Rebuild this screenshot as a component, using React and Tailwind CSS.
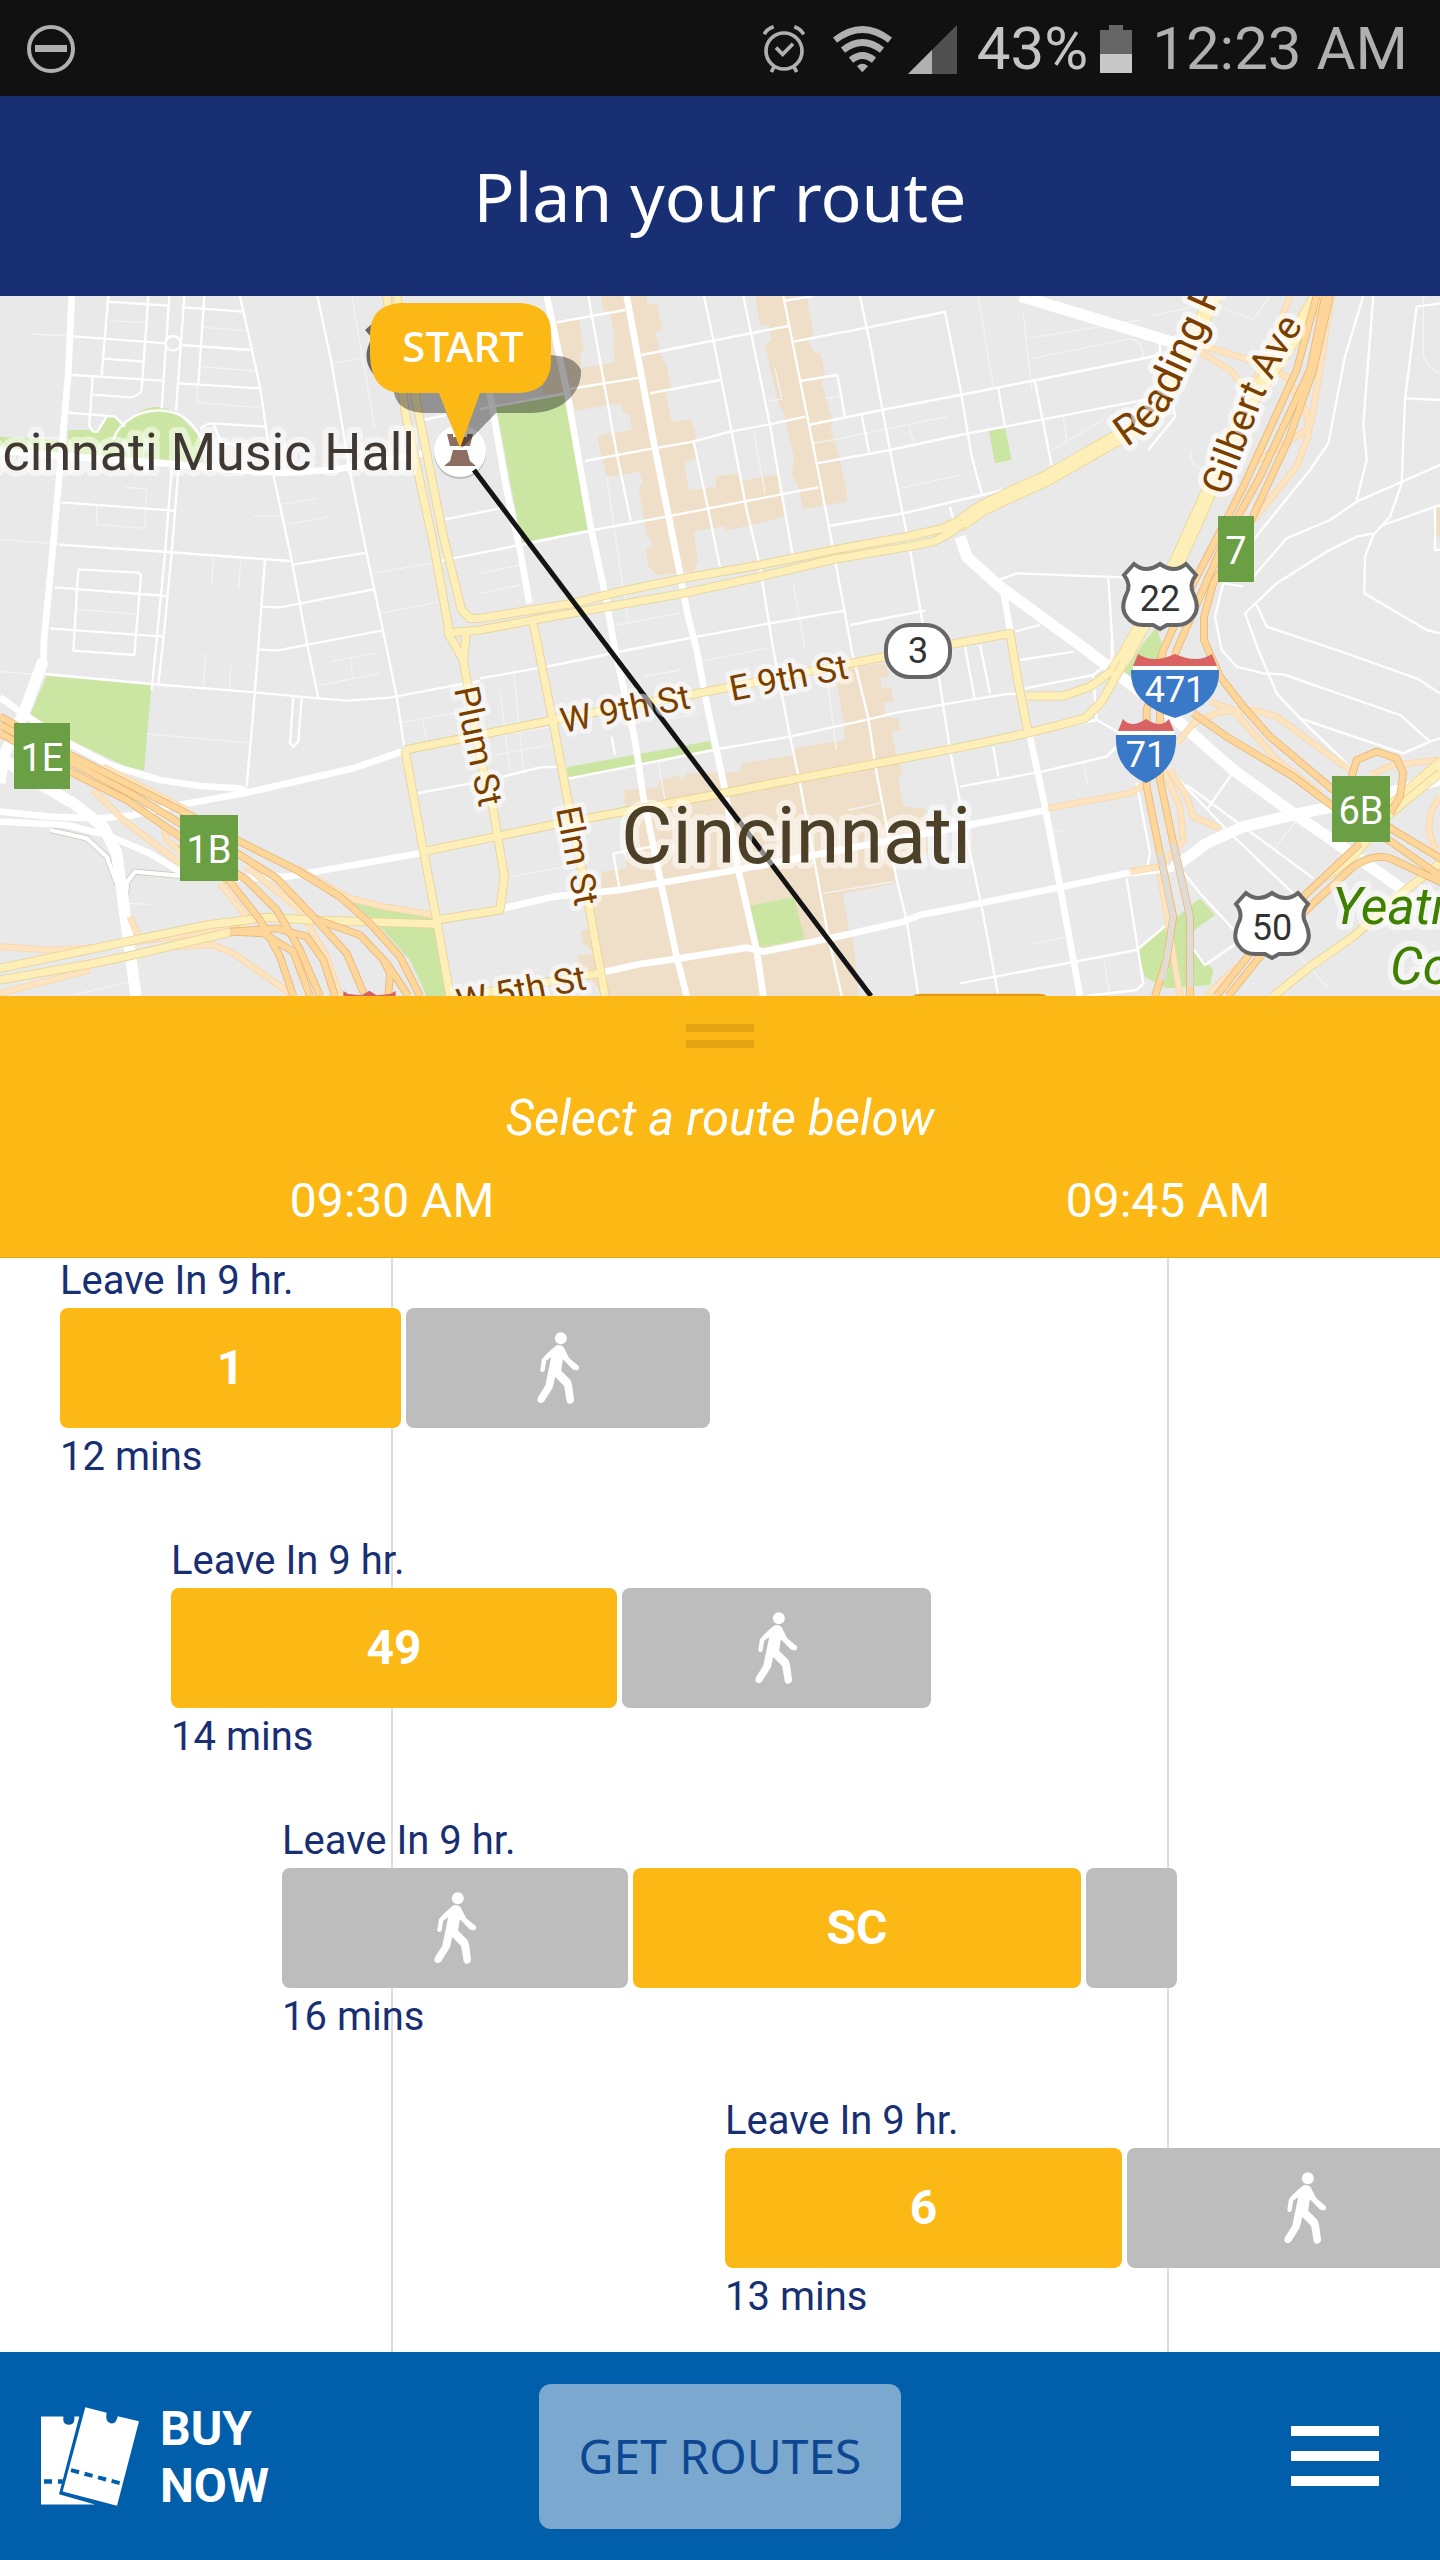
// Horizontal positions on the timeline are in units of a 1440 wide screen
const vw = (x) => `${x / 14.4}vw`

const TICKS = ['09:30 AM', '09:45 AM']
const TICK_WIDTH = 776
const FIRST_TICK = 392

const ROUTES = [
  { id: 'r1', start: 60, leave: 'Leave In 9 hr.', total: '12 mins', legs: [{ bus: '1', width: 341 }, { walk: true, width: 304 }] },
  { id: 'r2', start: 171, leave: 'Leave In 9 hr.', total: '14 mins', legs: [{ bus: '49', width: 446 }, { walk: true, width: 309 }] },
  { id: 'r3', start: 282, leave: 'Leave In 9 hr.', total: '16 mins', legs: [{ walk: true, width: 346 }, { bus: 'SC', width: 448 }, { width: 91 }] },
  { id: 'r4', start: 725, leave: 'Leave In 9 hr.', total: '13 mins', legs: [{ bus: '6', width: 397 }, { walk: true, width: 356 }] },
]

// Map geometry, three units to a pixel
const PARKS = [
  'M0 440L205 450V420H300L320 382H345L370 405Q470 300 560 400L600 440L612 520L0 478Z',
  'M1488 350L1692 315L1770 718L1565 758Z',
  'M2967 422L3015 415L3035 510L2985 520Z',
  'M140 1157L455 1185L432 1442L380 1430L210 1350L90 1275Z',
  'M1055 1835L1130 1855L1300 1875L1350 2118H1280L1230 2010L1130 1900Z',
  'M1700 1432L2130 1353L2137 1380L1706 1462Z',
  'M2250 1847L2382 1822L2415 1947L2275 1973Z',
  'M3430 1060L3470 1010L3485 1060L3470 1110L3400 1160L3370 1150Z',
  'M3600 1825L3645 1875L3570 1930V1970L3640 2040L3630 2085L3500 2095L3435 2060L3410 1980Z',
]

const BLOCKS = [
  'M1650 95L1737 90L1752 185L1740 190L1745 235L1845 215L1838 160L1845 150L1830 70L1810 60L1803 18H1940L1943 45L1970 40L1988 120L1965 130L1988 210L2000 225L2015 295L1998 310L2015 395L2075 388L2090 440L2082 450L2088 505L2052 520L2068 600L2120 595L2148 590L2146 560L2215 548L2227 573L2332 553L2345 610L2360 675L2320 690L2178 722L2175 708L2080 725L2094 810L2080 845L1970 855L1945 830L1937 780L1960 765L1940 735L1915 590L1928 583L1920 545L1820 562L1792 445L1810 432L1895 420L1890 375L1870 370L1860 340L1725 362L1710 305L1625 315Z',
  'M2265 18H2420L2440 130L2425 150L2443 190H2460L2475 250L2465 280L2500 400L2490 415L2515 490L2540 600V635L2410 657L2395 590L2375 555L2382 500L2350 365L2335 340L2295 165L2315 150L2305 105H2280Z',
  'M1873 1500L1975 1490V1470L2040 1455L2045 1475L2060 1450L2220 1445L2225 1420L2380 1395L2385 1375L2535 1350L2530 1290L2510 1180L2515 1135L2655 1120L2670 1160L2640 1165L2645 1195L2675 1192L2682 1235L2650 1240L2660 1280L2695 1285L2702 1320L2675 1325L2685 1380L2710 1450L2695 1460L2710 1550L2775 1555L2785 1690L2690 1705L2685 1780L2528 1812L2548 1920L2560 1950L2575 2118H1815L1730 2020L1735 1995L1780 1990L1745 1955V1920H1775L1765 1820L1805 1805V1745L1880 1735Z',
  'M4305 655H4320V740H4297Z',
]

const LANES = [
  'M90 132L220 138M330 92L440 98M610 112L735 122M605 230L765 243M592 285V337L780 353M0 748L178 762',
  'M375 592L440 597L435 715L290 703V648M845 643L950 625M760 679H845M860 703L990 679M640 800L635 885M722 808L716 895',
  'M1055 18L1125 415M1000 220L1090 203M1120 850L1320 815M1140 970L1320 935M230 958L405 972',
  'M1440 850L1560 825M1440 910L1560 885M1820 560L1885 1000M1850 1005L2040 970M2380 880L2415 1080M2305 332L2345 328L2325 235M2260 420L2295 610M2440 460L2520 445L2840 380M2700 595L2880 555M2475 325L2520 318M2725 400L2742 460',
  'M2935 18L2980 290M3070 70L3095 300M3085 145L3420 90M3095 205L3380 148Q3425 140 3430 200M3155 480L3310 390M3190 380L3200 450M3450 80L3620 40M3650 45L3760 90L3810 18M3575 480Q3560 520 3610 540M4270 18V200Q4290 240 4320 250',
  'M1500 1200L1530 1440M1540 1130L1570 1440M1480 1340L1650 1310M1480 1395L1650 1365M0 1145L130 1155M440 1332L740 1358M610 1190L617 1090M688 1200L692 1125M995 1115L1130 1088M955 1187L1140 1150M1050 1105L1060 1165M1205 1297L1370 1268M1268 1290L1280 1350M220 2115L390 2075M380 1840L450 1843',
  'M1930 1160L2040 1140M1990 1290L2100 1270M1975 1420L2000 1560M2100 1115L2300 1075M2480 1160L2510 1380M2545 1560L2640 1540M1530 1760L1700 1730M2470 1810L2680 1775M3250 1425L3265 1490M3100 1960L3210 1940M3310 2000L3330 2118M3160 1625L3195 1620M3900 2000L3985 2095M3825 1675L3890 1590',
]

const STREETS = [
  'M325 18L305 255M445 18L425 300Q420 315 393 322L280 314M278 260L268 405Q275 430 292 425L320 380M508 18L485 355M553 18L528 362M613 18L595 283',
  'M320 35L505 47M553 52L730 65M220 139L500 160M540 165L752 180M312 206L432 215M218 255L487 272M537 280L778 295M205 368L345 380L375 410',
  'M340 450Q350 410 400 380Q470 345 540 375Q580 395 605 450M720 18L780 290L815 530L875 810L925 1080L955 1225M952 18L995 220L1050 545L1100 790L1155 1050L1190 1220L1213 1370M600 415Q620 400 640 400L795 410M640 400L665 460L780 468',
  'M185 637L522 662M178 764L500 786L870 813M880 824L1100 788M515 540L495 790L470 1050L455 1200M535 540L515 790L490 1050L475 1180M165 892L500 918M150 1015L487 1040M235 838L415 848L423 855L403 1095L220 1082L235 838M795 810L762 1240L740 1490M785 950L840 952L1120 898M775 1078L830 1082L1145 1022',
  'M1335 688L1500 655M1325 812L1560 765M1270 390L1360 370',
  'M1670 97L1875 60M1690 300L1920 263M1440 357L1690 312M1755 513L1960 475L2080 455L2190 425L2310 403L2415 380M1560 765L1780 720L2000 680L2230 635L2455 592M1925 195L2140 152L2365 108M1950 310L2160 270',
  'M1765 18L1850 490L1892 692M2112 18L2140 150L2195 425L2240 660L2278 820L2320 1080L2370 1340L2400 1480L2485 1940L2525 2118M2230 18L2310 405L2345 610L2378 795M2080 450L2125 660L2160 832M2350 18L2400 270L2450 520L2498 770L2555 1080L2605 1285L2630 1450L2690 1770L2720 1890L2755 2118M2580 18L2610 160L2670 480L2730 780L2775 1040L2815 1150L2850 1380L2900 1640L2945 1850L2995 2118',
  'M2380 155L2605 112L2835 66L2880 290L2915 500L2945 610M2355 32L2440 18M2400 273L2512 255L2535 380M2425 405L2645 360L2880 315L3110 270L3480 195V150M2450 520L2670 480L2880 435L3130 388L3440 328L3520 350L3525 380L3445 480M2585 375L2607 485M2485 708L2710 670L3010 600M2850 650L2860 690',
  'M1440 1165L1640 1130L1885 1080L2080 1042L2310 1000L2535 962M2550 1005L2775 962M2995 295L3015 410M3105 275L3155 525M2995 870L3050 850L3370 862M3325 865L3340 1100M3045 1025L3120 1005',
  'M4090 18L4035 200L3985 460L3930 540L3760 750M4120 18L4090 400L4100 510L4070 630M4320 40L4250 50L4215 330L4205 580L4170 680L4120 735L4095 800L4093 910L4280 1020L4320 1030M4220 325L4320 330M4320 525L4070 635L3990 690L3860 745L3760 860M4320 645L4150 705M4120 730L4070 740L3980 785L3830 880L3735 970L3775 1080L3830 1210L3900 1285L4050 1430M3770 945L3800 1010L4010 1080L4250 1165L4320 1210M3670 880L3730 890M3670 880L3645 980L3665 1080L3710 1130L3790 1150L3850 1153L4200 1275L4290 1355L4210 1390L3900 1285M4290 1355L4320 1345M4305 650V780H4320',
  'M135 1152L455 1182L765 1207L955 1225L1040 1232L1170 1223L1440 1172M880 1220L870 1360L880 1370L895 1355L905 1225M1250 1510L1440 1475M1510 1460L1620 1432L1700 1430M1706 1466L2140 1380L2370 1340L2605 1288L2690 1268L2880 1235L3020 1212H3055M1840 1690L1960 1670M1840 1690L1858 1795M1835 1340L1845 1395',
  'M2895 1070L2925 1230M2940 1065L2970 1210M3060 1110L3220 1085M3075 1195L3280 1155L3335 1110V1050M2880 1490L3125 1445L3320 1400L3380 1340L3290 1290L3280 1160M3290 1290L3090 1330M2980 1370L2995 1460M3510 1440L3680 1620L3880 1810M3560 1485L3940 1765M3700 1445L3620 1560M3410 1480L3450 1690L3440 1740M3545 1740L3600 1810L3720 1940M3380 1765L3430 2080L3410 2100L3260 2118M2880 2080L3410 1980L3530 1880M3560 1950L3615 2025L3710 1960',
]

const AVENUES = [
  'M0 482L210 500L500 520L700 540L850 548L1000 540L1270 490',
  'M1468 300L1520 600L1560 780L1588 940M1640 18L1700 300L1770 700L1820 935L1845 1080L1905 1350L1930 1520L1985 1790L2030 2000L2060 2118M1880 18L1960 450L2040 850L2062 970L2090 1080L2120 1240L2175 1500L2215 1740L2270 1980L2290 2118',
  'M0 1222L60 1265L210 1362L330 1425L480 1470L600 1488L720 1495L745 1508M0 1565L150 1580L300 1585L400 1575L500 1552L740 1508L1060 1435L1205 1385M0 1595L200 1605L320 1635L450 1690L540 1745L700 1765L860 1760L1260 1690',
  'M1510 1855L1660 1820L1860 1800L2220 1738L2880 1610L3140 1560M1815 2045L1920 2022L2040 2005L2240 1973L2290 1985L2490 1945L2710 1895L2760 1875L2880 1852L3180 1792L3380 1750L3520 1735M3090 1340L3135 1550L3180 1790L3240 2118M3010 900L3030 1020',
  'M215 18L205 250L160 760L132 1050L130 1120',
]

const BOULEVARDS = [
  'M130 1110L75 1260L10 1400L0 1480M0 1400L100 1470L220 1540L310 1610L350 1690L365 1800L385 1950L408 2118',
  'M3060 18L3480 145L3560 170M2880 740L2900 800L3000 890L3260 1080L3530 1290L3700 1440L3880 1570L4040 1680L4210 1800M3520 1735L3620 1660L3730 1610L3890 1572L4000 1550L4320 1470',
]

const RAMPS = [
  'M310 1430L560 1560M280 1500L370 1590L540 1720M490 1600L500 1650L560 1700M660 1780L740 1880M890 1735L1050 1825L1150 1850L1300 1875M740 1730L900 1860L980 2000L1020 2118',
  'M0 1970L150 1980L260 1975L740 1910M520 1970L640 1965L700 1990L870 2110M0 2110L270 2040M390 1880L420 1950',
  'M3870 18L3820 150L3760 280M3995 18L3940 360L3920 450L3890 530L3760 690M3580 160L3750 210L3860 260L3920 370L3925 450M3600 185L3690 240L3740 300M3920 420L3760 520',
  'M3145 1555L3390 1510L3440 1480M3510 1440L3560 1520L3580 1580L3660 1615M3490 1440L3540 1550L3550 1650L3480 1730L3390 1745M3530 1360L3580 1300L3660 1265L3760 1260L3830 1280L4050 1440M3630 1235L3700 1260L3830 1410L3960 1510M4320 1410L4180 1425L4110 1455M3540 2118L3480 1750M3620 2118L3710 2030M4320 1520Q4260 1600 4310 1680',
]

const ARTERIALS = [
  'M1160 18L1220 390L1300 760L1345 1010L1345 1030L1390 1110M1190 18L1260 390L1330 740L1385 960L1410 985L1440 985L1720 940L1860 905L2050 865L2280 825L2500 780L2720 740L2830 715L2880 690',
  'M1350 1028L1440 1020L1600 990L1825 950L2050 910L2280 860L2500 808L2725 770L2800 755L2840 735L2890 700M1400 1020L1390 1110L1440 1400L1480 1560L1513 1760L1500 1860L1310 1890',
  'M1595 980L1610 1050L1660 1300L1705 1540L1760 1810L1815 2118M1215 1380L1270 1680L1310 1890L1350 2118M1310 1902L930 1890L800 1882L620 1905L380 1955L0 2035M740 1915L400 1995L280 2020L0 2070',
  'M1215 1380L1440 1335L1660 1290L2120 1205L2655 1100L2880 1058L3030 1030L3055 1180L3085 1330M1270 1685L1655 1605L2140 1515L2880 1372L3080 1330L3255 1285L3305 1235L3370 1120M3080 1218L3190 1218L3270 1190L3340 1140M1440 2110L1810 2048',
  'M3820 2118L3930 2030L4060 1940L4180 1830L4320 1720M4320 1450L4170 1570L4060 1700L3980 1760',
]

const PARKWAYS = [
  'M2875 705L2945 655L3050 605L3140 565L3340 450L3440 400Q3480 370 3520 270L3655 -10',
  'M3340 1150L3380 1090L3530 820L3620 620L3740 350L3890 130L3970 -10M4330 1420L4170 1560',
]

const HIGHWAYS = [
  'M0 1280L210 1395L400 1490L560 1570L720 1655L890 1740L1020 1820L1110 1900L1200 2000L1260 2118M0 1305L210 1415L400 1515L540 1600L720 1695L830 1765L940 1880L1040 1990L1095 2118M0 1330L210 1445L380 1530L540 1640L740 1770L830 1860L900 1980L960 2118',
  'M540 1660L690 1775L780 1890L840 2000L880 2118M690 1925L830 1915L920 1940L970 2010L1005 2118M940 1885L1080 1935L1160 2020L1225 2118M1150 2010L1170 2050L1165 2118M690 1925L790 1930L880 1985L930 2118',
  'M3950 18L3890 240L3730 590L3580 880L3490 1080L3440 1260L3440 1490L3480 1690L3520 1880L3500 2010L3465 2118M3975 18L3930 240L3780 560L3670 760L3530 1080L3480 1250L3480 1470L3520 1660L3570 1880V2118',
  'M3990 18L3940 240L3865 450L3740 720L3640 880L3612 980V1050L3660 1160L3730 1250L3810 1340L4000 1500L4180 1620L4330 1710M3580 1270L3680 1340L3880 1460L4000 1550L4180 1660L4330 1765',
  'M4055 1460L4070 1410L4130 1385L4190 1405L4210 1450L4200 1520L4170 1570M3650 2118L3750 1990L3910 1820L4080 1660M3685 2118L3780 2000L3940 1840L4060 1730Q4120 1690 4170 1705L4330 1780',
]

const TUNNELS = ['M3480 1690L3518 1880L3510 1950L3487 2070M3520 1660L3570 1880L3572 2090']

function Paths({ items, ...rest }) {
  return (
    <g strokeLinejoin="round" {...rest}>
      {items.map((d) => <path key={d} d={d} />)}
    </g>
  )
}

// Coloured road with a darker casing under it
function Road({ items, width, color, casing }) {
  return (
    <g fill="none">
      <Paths items={items} stroke={casing} strokeWidth={width} />
      <Paths items={items} stroke={color} strokeWidth={width - 5} />
    </g>
  )
}

function StreetLabel({ x, y, angle, children }) {
  return (
    <text
      transform={`translate(${x} ${y}) rotate(${angle})`}
      className="text-[35px]"
      fill="#7a3e00"
      stroke="#ffffff"
      strokeOpacity="0.5"
      strokeWidth="10"
      strokeLinejoin="round"
      paintOrder="stroke"
    >
      {children}
    </text>
  )
}

function ExitSign({ x, y, width, children }) {
  return (
    <g>
      <rect x={x} y={y} width={width} height="66" fill="#6b9f43" />
      <text x={x + width / 2} y={y + 48} textAnchor="middle" fill="#fff" className="text-[38px]">{children}</text>
    </g>
  )
}

function UsShield({ x, y, children }) {
  return (
    <g transform={`translate(${x} ${y})`}>
      <path
        d="M-26 -33Q-14 -23 0 -33Q14 -23 26 -33L36 -22Q28 -12 34 -2Q40 12 33 20Q27 29 14 28H7L0 32L-7 28H-14Q-27 29 -33 20Q-40 12 -34 -2Q-28 -12 -36 -22Z"
        fill="#fff"
        stroke="#666"
        strokeWidth="4"
      />
      <text y="14" textAnchor="middle" fill="#333" className="text-[36px]">{children}</text>
    </g>
  )
}

function Interstate({ x, y, half, children }) {
  const w = half
  return (
    <g transform={`translate(${x} ${y})`}>
      <path d={`M${-w + 2} -20L${-w + 7} -32Q${-w / 2} -22 0 -32Q${w / 2} -22 ${w - 7} -32L${w - 2} -20Z`} fill="#d96262" />
      <path d={`M${-w + 2} -20H${w - 2}V-15H${-w + 2}Z`} fill="#fff" />
      <path d={`M${-w} -16H${w}Q${w + 2} 18 0 32Q${-w - 2} 18 ${-w} -16Z`} fill="#3a78c8" />
      <text y="16" textAnchor="middle" fill="#fff" className="text-[36px]">{children}</text>
    </g>
  )
}

function RouteMap() {
  return (
    <svg viewBox="0 0 1440 700" className="block w-full bg-[#e9e9e9] font-[Roboto,sans-serif]" role="img" aria-label="Map of Cincinnati">
      <g transform="translate(0 -6) scale(0.33333)">
        <Paths items={BLOCKS} fill="#f0dfc8" />
        <Paths items={PARKS} fill="#cbe6a3" />
        <Paths items={LANES} fill="none" stroke="#f3f3f3" strokeWidth="4" />
        <Paths items={STREETS} fill="none" stroke="#fff" strokeWidth="7" />
        <circle cx="519" cy="160" r="22" fill="#e9e9e9" stroke="#fff" strokeWidth="7" />
        <path d="M150 1620L260 1645L320 1700L352 1785M545 1758L405 1745L382 1775L378 1812" fill="none" stroke="#cfc8bd" strokeWidth="18" />
        <path d="M150 1620L260 1645L320 1700L352 1785M545 1758L405 1745L382 1775L378 1812" fill="none" stroke="#fff" strokeWidth="13" />
        <Paths items={AVENUES} fill="none" stroke="#fff" strokeWidth="20" />
        <Paths items={BOULEVARDS} fill="none" stroke="#fff" strokeWidth="34" />
        <Road items={RAMPS} width={20} color="#fde4c1" casing="#fbd6a8" />
        <Road items={PARKWAYS} width={48} color="#feefb9" casing="#ead792" />
        <Road items={ARTERIALS} width={27} color="#feefb9" casing="#e6d396" />
        <Road items={HIGHWAYS} width={23} color="#fed69a" casing="#e6b679" />
        <Paths items={TUNNELS} fill="none" stroke="#dfdcd7" strokeWidth="17" />
        <path d="M1030 2118V2103L1045 2112L1085 2116L1108 2102L1130 2116L1170 2112L1187 2103V2118Z" fill="#d96262" />
        <path d="M2740 2118Q2745 2111 2770 2111H3110Q3135 2111 3140 2118Z" fill="#e39a14" />
      </g>

      <text x="415" y="174" textAnchor="end" className="text-[52px]" fill="#3f3833" stroke="#fff" strokeOpacity="0.5" strokeWidth="12" strokeLinejoin="round" paintOrder="stroke">Cincinnati Music Hall</text>
      <circle cx="460" cy="157" r="26" fill="#bdbdbd" />
      <circle cx="460" cy="155" r="26" fill="#fff" />
      <path d="M447 138H453V141H457V138H463V141H467V138H473L470 150H450ZM453 154H467L470 165L476 170H444L450 165Z" fill="#8d6e63" />
      <path d="M474 174L871 700" stroke="#141414" strokeWidth="5" />

      <text x="621" y="567" className="text-[79px]" fill="#4c4029" stroke="#fff" strokeOpacity="0.5" strokeWidth="12" strokeLinejoin="round" paintOrder="stroke">Cincinnati</text>
      <StreetLabel x={563} y={437} angle={-11}>W 9th St</StreetLabel>
      <StreetLabel x={732} y={405} angle={-11}>E 9th St</StreetLabel>
      <StreetLabel x={454} y={393} angle={78}>Plum St</StreetLabel>
      <StreetLabel x={556} y={513} angle={79}>Elm St</StreetLabel>
      <StreetLabel x={459} y={718} angle={-11}>W 5th St</StreetLabel>

      <defs>
        <path id="reading" d="M1126 151Q1161 131 1176 97L1216 11L1243 -50" />
        <path id="gilbert" d="M1226 201L1262 105Q1282 61 1301 33L1341 -40" />
      </defs>
      <g fill="#7a3e00" stroke="#fff" strokeOpacity="0.6" strokeWidth="11" strokeLinejoin="round" paintOrder="stroke">
        <text className="text-[42px]"><textPath href="#reading">Reading Rd</textPath></text>
        <text className="text-[39px]"><textPath href="#gilbert">Gilbert Ave</textPath></text>
      </g>
      <g fill="#3f8000" stroke="#fff" strokeOpacity="0.5" strokeWidth="12" strokeLinejoin="round" paintOrder="stroke" className="text-[52px] italic">
        <text x="1332" y="628">Yeatman's</text>
        <text x="1390" y="688">Cove</text>
      </g>

      <ExitSign x={14} y={427} width={56}>1E</ExitSign>
      <ExitSign x={180} y={519} width={58}>1B</ExitSign>
      <ExitSign x={1218} y={220} width={36}>7</ExitSign>
      <ExitSign x={1332} y={480} width={58}>6B</ExitSign>
      <UsShield x={1160} y={301}>22</UsShield>
      <UsShield x={1272} y={630}>50</UsShield>
      <Interstate x={1175} y={390} half={44}>471</Interstate>
      <Interstate x={1146} y={455} half={30}>71</Interstate>
      <rect x="886" y="329" width="64" height="52" rx="24" fill="#fff" stroke="#666" strokeWidth="4" />
      <text x="918" y="367" textAnchor="middle" fill="#333" className="text-[36px]">3</text>

      {/* start pin with its cast shadow */}
      <path d="M374 26L365 34L372 42Q360 62 374 79Z" fill="#666" />
      <path d="M394 97Q398 117 428 117H446L462 152L496 117H532C566 116 582 94 581 74Q575 59 546 59H460Q394 72 394 97Z" fill="#000" fillOpacity="0.37" />
      <path d="M400 7H521Q551 9 551 37V67Q549 95 521 97H480L460 152L439 97H400Q371 95 370 60V37Q371 9 400 7Z" fill="#fcb814" />
      <text x="463" y="66" textAnchor="middle" fill="#fff" className="font-['Noto_Sans',sans-serif] text-[42px] font-medium">START</text>
    </svg>
  )
}

function StatusBar() {
  return (
    <div className="flex h-24 items-center bg-[#111] pt-[2px] pr-[32px] pl-[26px] font-[Roboto,sans-serif] text-[60px] leading-[70px] text-[#b0b0b0]">
      <svg viewBox="0 0 50 50" className="h-[50px] w-[50px]" aria-hidden="true">
        <circle cx="25" cy="25" r="22" fill="none" stroke="currentColor" strokeWidth="4" />
        <path d="M9 21H41V28H9Z" fill="currentColor" />
      </svg>
      <svg viewBox="0 0 126 144" className="ml-auto h-12 w-[42px]" fill="none" stroke="currentColor" aria-hidden="true">
        <circle cx="63" cy="78" r="54" strokeWidth="11" />
        <path d="M39 68L59 88L90 56M4 28Q10 12 32 5M94 5Q114 12 122 28M34 124L25 141M92 124L101 141" strokeWidth="11" />
      </svg>
      <svg viewBox="0 0 177 140" className="ml-7 h-[47px] w-[59px]" fill="none" stroke="currentColor" aria-hidden="true">
        <path d="M6 42Q88 -22 171 42M30 72Q88 26 147 72M54 102Q88 74 123 102" strokeWidth="20" />
        <path d="M72 120Q88 106 105 120L88 138Z" fill="currentColor" stroke="none" />
      </svg>
      <svg viewBox="0 0 49 49" className="ml-4 h-[49px] w-[49px]" aria-hidden="true">
        <path d="M49 0V49H0Z" fill="#505050" />
        <path d="M24 25V49H0Z" fill="currentColor" />
      </svg>
      <span className="ml-5 text-[#c4c4c4]">43%</span>
      <svg viewBox="0 0 32 48" className="ml-3 h-12 w-8" aria-hidden="true">
        <path d="M9 0H23V5H32V48H0V5H9Z" fill="#666" />
        <path d="M0 29H32V48H0Z" fill="#c8c8c8" />
      </svg>
      <span className="ml-5">12:23 AM</span>
    </div>
  )
}

function WalkIcon() {
  return (
    <svg viewBox="168 95 128 217" className="h-[72px] w-[43px]" fill="#fff" role="img" aria-label="Walk">
      <circle cx="239" cy="114" r="18" />
      <path d="M222 138Q235 130 247 140L265 175L292 197Q298 205 288 211L275 208L250 182L245 178L240 212L268 240L273 255L279 300Q276 313 262 311L257 305L249 258L222 231L215 262L188 305Q175 315 168 302L170 292L192 257L205 195L210 170L195 182L190 212Q182 220 177 210L182 178Q190 165 222 138Z" />
    </svg>
  )
}

function TicketIcon() {
  return (
    <svg viewBox="33 80 294 296" className="h-[99px] w-[98px]" aria-hidden="true">
      <path d="M33 108H100V120A17 17 0 0 0 133 120V108H148L87 341L195 372H33Z" fill="#fff" />
      <path d="M42 303H66M84 303H98" stroke="#005eab" strokeWidth="13" />
      <path d="M166 80L230 97Q224 125 243 129Q260 129 263 107L327 122L261 376L98 333Z" fill="#fff" />
      <path d="M123 269L270 308" stroke="#005eab" strokeWidth="12" strokeDasharray="25 17" />
    </svg>
  )
}

function Leg({ leg }) {
  const color = leg.bus ? 'bg-[#fcb814]' : 'bg-[#bdbdbd]'
  return (
    <div
      className={`flex h-[120px] shrink-0 items-center justify-center rounded-lg text-[48px] font-bold text-white ${color}`}
      style={{ width: vw(leg.width) }}
    >
      {leg.bus}
      {leg.walk && <WalkIcon />}
    </div>
  )
}

function Timeline() {
  return (
    <section className="relative flex-1 overflow-hidden bg-white font-[Roboto,sans-serif]">
      <div className="absolute inset-0 flex" style={{ paddingLeft: vw(FIRST_TICK - 1) }}>
        {TICKS.map((t) => (
          <div key={t} className="shrink-0 border-l-2 border-[#dcdcdc]" style={{ width: vw(TICK_WIDTH) }} />
        ))}
      </div>
      <ul className="relative flex flex-col gap-[52px] text-[40px] text-[#192f73]">
        {ROUTES.map((r) => (
          <li key={r.id} style={{ marginLeft: vw(r.start) }}>
            <p className="mb-1 leading-[46px]">{r.leave}</p>
            <div className="flex gap-[5px]">
              {r.legs.map((leg, i) => <Leg key={i} leg={leg} />)}
            </div>
            <p className="leading-[58px]">{r.total}</p>
          </li>
        ))}
      </ul>
    </section>
  )
}

export default function App() {
  return (
    <div className="flex min-h-screen flex-col overflow-hidden">
      <StatusBar />
      <header className="flex h-[200px] items-center justify-center bg-[#192f73]">
        <h1 className="font-['Noto_Sans',sans-serif] text-[68px] text-white">Plan your route</h1>
      </header>
      <RouteMap />

      <section className="border-b border-[#f0a310] bg-[#fcb814] pt-7 pb-[26px] font-[Roboto,sans-serif] text-[48px] leading-[60px] text-white">
        <div className="mx-auto h-6 w-[68px] border-y-8 border-[#e3a514]" />
        <p className="mt-[41px] text-center text-[49px] italic">Select a route below</p>
        <div className="mt-[22px] flex overflow-hidden" style={{ paddingLeft: vw(FIRST_TICK - TICK_WIDTH / 2) }}>
          {TICKS.map((t) => (
            <time key={t} className="shrink-0 text-center" style={{ width: vw(TICK_WIDTH) }}>{t}</time>
          ))}
        </div>
      </section>

      <Timeline />

      <footer className="grid h-[208px] grid-cols-[1fr_auto_1fr] items-center bg-[#005eab] px-[41px]">
        <a href="#tickets" className="flex items-center gap-[21px] font-[Roboto,sans-serif] text-[48px] leading-[57px] font-bold text-white">
          <TicketIcon />
          <span className="pt-[2px]">BUY<br />NOW</span>
        </a>
        <button type="button" className="h-[145px] rounded-xl bg-[#7ba8cf] px-10 font-['Noto_Sans',sans-serif] text-[48px] text-[#0d4792]">
          GET ROUTES
        </button>
        <button type="button" aria-label="Menu" className="mr-5 flex w-[88px] flex-col gap-[15px] justify-self-end">
          <span className="h-[10px] w-full bg-white" />
          <span className="h-[10px] w-full bg-white" />
          <span className="h-[10px] w-full bg-white" />
        </button>
      </footer>
    </div>
  )
}
